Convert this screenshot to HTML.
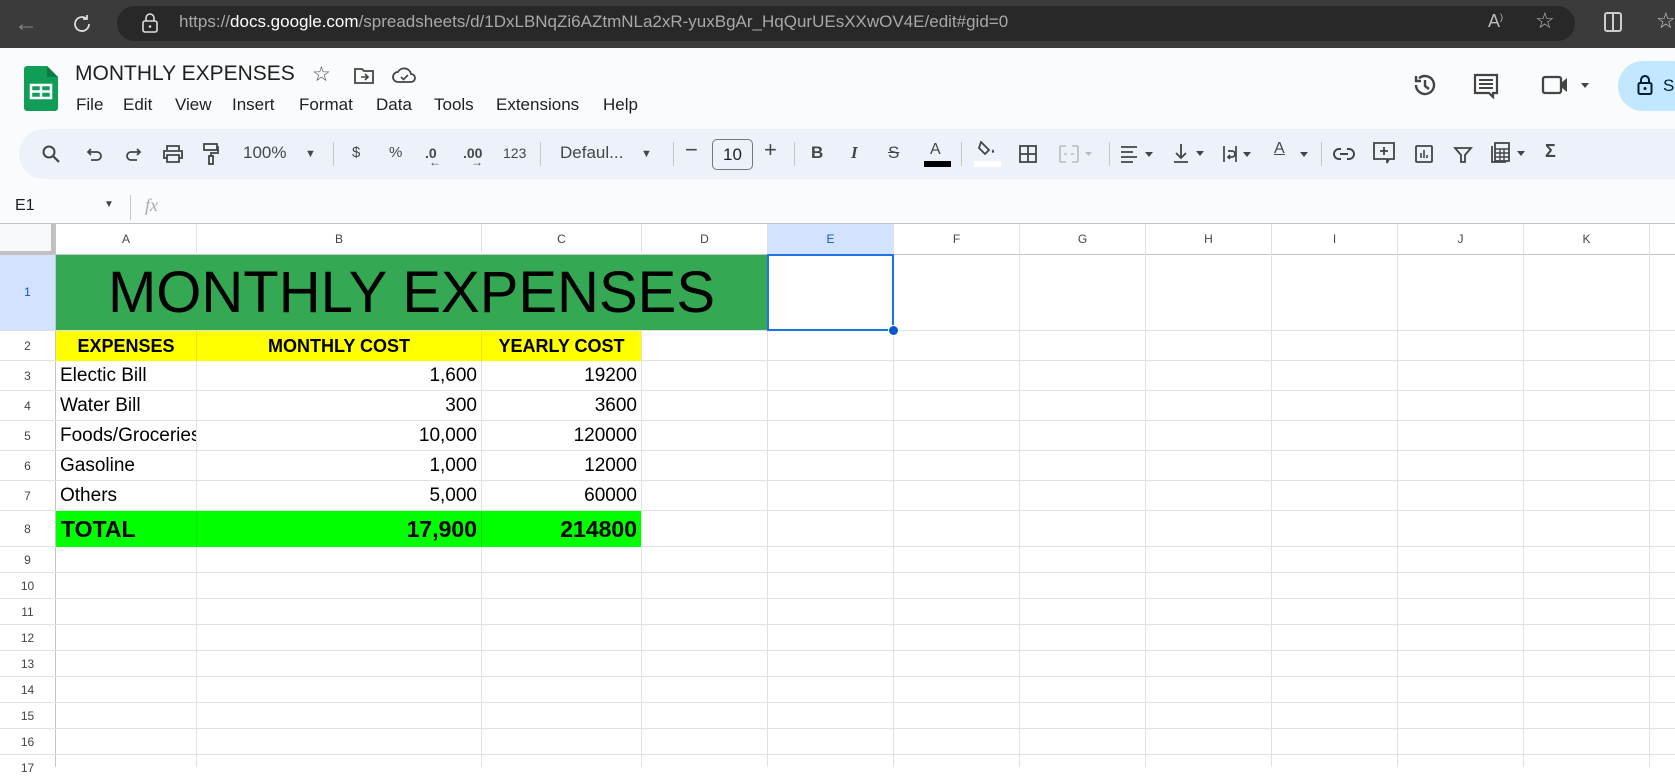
<!DOCTYPE html>
<html><head><meta charset="utf-8"><style>
*{margin:0;padding:0;box-sizing:border-box}
body{width:1675px;height:767px;overflow:hidden;background:#fff;font-family:"Liberation Sans",Arial,sans-serif;position:relative;color:#1f1f1f}
.a{position:absolute}
.tb{position:absolute;top:143px;font-size:15px;color:#444746;line-height:20px}
.sep{position:absolute;top:142px;width:1px;height:24px;background:#c7c7c7}
.vl{position:absolute;top:224px;width:1px;height:543px;background:#e1e1e1}
.hl{position:absolute;left:0;width:1675px;height:1px;background:#e1e1e1}
.rh{position:absolute;left:0;width:55px;text-align:center;font-size:12px;color:#444}
.ch{position:absolute;top:224px;height:30px;line-height:30px;text-align:center;font-size:12px;color:#444}
.c{position:absolute;font-size:19px;color:#000;white-space:nowrap;overflow:hidden}
svg{position:absolute}
</style></head><body>
<!-- browser bar -->
<div class="a" style="left:0;top:0;width:1675px;height:48px;background:#3b3b3b"></div>
<div class="a" style="left:117px;top:6px;width:1458px;height:35px;border-radius:18px;background:#282828"></div>
<div class="a" style="left:14px;top:10px;font-size:24px;color:#888">&#8592;</div>
<svg style="left:70px;top:12px" width="24" height="24" viewBox="0 0 24 24"><path d="M19 12a7 7 0 1 1-3-5.7M17 3v4h-4" fill="none" stroke="#ddd" stroke-width="1.8"/></svg>
<svg style="left:141px;top:12px" width="18" height="22" viewBox="0 0 18 22"><rect x="2" y="9" width="14" height="11" rx="2" fill="none" stroke="#ddd" stroke-width="1.6"/><path d="M5 9V6a4 4 0 0 1 8 0v3" fill="none" stroke="#ddd" stroke-width="1.6"/><circle cx="9" cy="14.5" r="1.3" fill="#ddd"/></svg>
<div class="a" style="left:179px;top:12px;font-size:17px;color:#a8a8a8;white-space:nowrap">https://<span style="color:#fff">docs.google.com</span>/spreadsheets/d/1DxLBNqZi6AZtmNLa2xR-yuxBgAr_HqQurUEsXXwOV4E/edit#gid=0</div>
<div class="a" style="left:1488px;top:11px;font-size:18px;color:#bbb">A<sup style="font-size:9px">)</sup></div>
<div class="a" style="left:1535px;top:8px;font-size:22px;color:#bbb">☆</div>
<div class="a" style="left:1604px;top:12px;width:18px;height:20px;border:2px solid #ccc;border-radius:3px"></div>
<div class="a" style="left:1612px;top:12px;width:2px;height:20px;background:#ccc"></div>
<div class="a" style="left:1656px;top:8px;font-size:22px;color:#ccc">☆</div>
<!-- sheets header -->
<div class="a" style="left:0;top:48px;width:1675px;height:176px;background:#f9fbfd"></div>
<svg style="left:24px;top:66px" width="34" height="45" viewBox="0 0 34 45"><path d="M3 0h20l11 11v31a3 3 0 0 1-3 3H3a3 3 0 0 1-3-3V3a3 3 0 0 1 3-3z" fill="#0f9d58"/><path d="M23 0v11h11z" fill="#0b7a43"/><rect x="7" y="19" width="20" height="13" fill="none" stroke="#fff" stroke-width="2.5"/><path d="M17 19v13M7 25.5h20" stroke="#fff" stroke-width="2.5"/></svg>
<div class="a" style="left:75px;top:62px;font-size:21px;color:#1f1f1f">MONTHLY EXPENSES</div>
<div class="a" style="left:312px;top:62px;font-size:21px;color:#444">☆</div>
<svg style="left:353px;top:67px" width="22" height="18" viewBox="0 0 22 18"><path d="M2 2h7l2 2h9v12H2z" fill="none" stroke="#444" stroke-width="1.8"/><path d="M8 10h7M12 7l3 3-3 3" fill="none" stroke="#444" stroke-width="1.6"/></svg>
<svg style="left:392px;top:66px" width="24" height="18" viewBox="0 0 24 18"><path d="M6 16a5 5 0 0 1 0-10 7 7 0 0 1 13 2 4 4 0 0 1 0 8z" fill="none" stroke="#444" stroke-width="1.8"/><path d="M9 11l2.5 2.5L16 9" fill="none" stroke="#444" stroke-width="1.6"/></svg>
<div class="a" style="left:76px;top:95px;font-size:17px;color:#1f1f1f;word-spacing:0">
<span style="position:absolute;left:0">File</span><span style="position:absolute;left:47px">Edit</span><span style="position:absolute;left:99px">View</span><span style="position:absolute;left:156px">Insert</span><span style="position:absolute;left:223px">Format</span><span style="position:absolute;left:300px">Data</span><span style="position:absolute;left:358px">Tools</span><span style="position:absolute;left:420px">Extensions</span><span style="position:absolute;left:527px">Help</span></div>
<svg style="left:1412px;top:72px" width="26" height="26" viewBox="0 0 26 26"><path d="M4 13a9 9 0 1 0 3-6.7M4 4v5h5" fill="none" stroke="#444" stroke-width="2.4"/><path d="M13 8v6l4 3" fill="none" stroke="#444" stroke-width="2.4"/></svg>
<svg style="left:1473px;top:73px" width="26" height="26" viewBox="0 0 26 26"><path d="M2 2h22v18h-4v4l-4-4H2z" fill="none" stroke="#444" stroke-width="2.2"/><path d="M6 7h14M6 11h14M6 15h14" stroke="#444" stroke-width="2"/></svg>
<svg style="left:1541px;top:74px" width="50" height="22" viewBox="0 0 50 22"><rect x="2" y="3" width="18" height="16" rx="2" fill="none" stroke="#444" stroke-width="2.3"/><path d="M20 9l6-5v14l-6-5z" fill="#444"/><path d="M40 9h8l-4 5z" fill="#444"/></svg>
<div class="a" style="left:1618px;top:61px;width:80px;height:50px;border-radius:25px;background:#c2e7ff"></div>
<svg style="left:1637px;top:74px" width="16" height="22" viewBox="0 0 16 22"><rect x="1.5" y="9" width="13" height="11" rx="1.5" fill="none" stroke="#001d35" stroke-width="2"/><path d="M4 9V6a4 4 0 0 1 8 0v3" fill="none" stroke="#001d35" stroke-width="2"/><circle cx="8" cy="14.5" r="1.5" fill="#001d35"/></svg>
<div class="a" style="left:1663px;top:76px;font-size:17px;color:#001d35">S</div>
<!-- toolbar -->
<div class="a" style="left:19px;top:129px;width:1700px;height:50px;border-radius:25px;background:#edf2fa"></div>
<svg style="left:41px;top:144px" width="20" height="20" viewBox="0 0 20 20"><circle cx="8" cy="8" r="5.5" fill="none" stroke="#444" stroke-width="2"/><path d="M12 12l6 6" stroke="#444" stroke-width="2.2"/></svg>
<svg style="left:86px;top:146px" width="18" height="18" viewBox="0 0 18 18"><path d="M5 3L2 6l3 3M2 6h9a4 4 0 0 1 0 8H5" fill="none" stroke="#444" stroke-width="1.8"/></svg>
<svg style="left:124px;top:146px" width="18" height="18" viewBox="0 0 18 18"><path d="M13 3l3 3-3 3M16 6H7a4 4 0 0 0 0 8h6" fill="none" stroke="#444" stroke-width="1.8"/></svg>
<svg style="left:162px;top:144px" width="22" height="20" viewBox="0 0 22 20"><path d="M5 6V2h12v4M5 14H2V7h18v7h-3M5 11h12v7H5z" fill="none" stroke="#444" stroke-width="1.8"/></svg>
<svg style="left:202px;top:142px" width="18" height="24" viewBox="0 0 18 24"><rect x="2" y="2" width="13" height="6" fill="none" stroke="#444" stroke-width="1.8"/><path d="M15 5h1v6H9v3" fill="none" stroke="#444" stroke-width="1.8"/><rect x="7" y="14" width="4" height="8" fill="none" stroke="#444" stroke-width="1.8"/></svg>
<div class="tb" style="left:243px;font-size:17px">100%</div>
<div class="tb" style="left:305px;font-size:11px;top:144px">▼</div>
<div class="sep" style="left:333px"></div>
<div class="tb" style="left:352px">$</div>
<div class="tb" style="left:389px">%</div>
<div class="tb" style="left:425px;font-size:14px;font-weight:bold">.0<span style="position:absolute;left:4px;top:9px;font-size:12px">←</span></div>
<div class="tb" style="left:463px;font-size:14px;font-weight:bold">.00<span style="position:absolute;left:8px;top:9px;font-size:12px">→</span></div>
<div class="tb" style="left:503px;font-size:14px">123</div>
<div class="sep" style="left:540px"></div>
<div class="tb" style="left:560px;font-size:17px">Defaul...</div>
<div class="tb" style="left:641px;font-size:11px;top:144px">▼</div>
<div class="sep" style="left:673px"></div>
<div class="tb" style="left:685px;font-size:22px;top:140px">−</div>
<div class="a" style="left:712px;top:139px;width:41px;height:31px;border:1px solid #747775;border-radius:5px;text-align:center;line-height:29px;font-size:17px;color:#1f1f1f">10</div>
<div class="tb" style="left:764px;font-size:22px;top:140px">+</div>
<div class="sep" style="left:794px"></div>
<div class="tb" style="left:811px;font-weight:bold;font-size:17px">B</div>
<div class="tb" style="left:851px;font-style:italic;font-size:17px;font-family:'Liberation Serif',serif;font-weight:bold">I</div>
<div class="tb" style="left:888px;font-size:17px;text-decoration:line-through">S</div>
<div class="tb" style="left:930px;font-size:16px;top:140px">A</div>
<div class="a" style="left:924px;top:161px;width:27px;height:6px;background:#000"></div>
<div class="sep" style="left:961px"></div>
<svg style="left:977px;top:140px" width="22" height="20" viewBox="0 0 22 20"><path d="M4 2l8 8-4 4-6-6z" fill="none" stroke="#444" stroke-width="1.8"/><path d="M16 9c-1 2-2 3 0 4 2-1 1-2 0-4z" fill="#444"/></svg>
<div class="a" style="left:974px;top:161px;width:27px;height:6px;background:#fff"></div>
<svg style="left:1018px;top:144px" width="20" height="20" viewBox="0 0 20 20"><rect x="2" y="2" width="16" height="16" fill="none" stroke="#444" stroke-width="1.8"/><path d="M10 2v16M2 10h16" stroke="#444" stroke-width="1.8"/></svg>
<svg style="left:1058px;top:144px" width="36" height="20" viewBox="0 0 36 20"><path d="M2 2h6M2 18h6M14 2h6M14 18h6M2 2v16M20 2v16M6 10h3M13 10h3" stroke="#bbb" stroke-width="1.6" fill="none"/><path d="M27 8h7l-3.5 4z" fill="#bbb"/></svg>
<div class="sep" style="left:1109px"></div>
<svg style="left:1119px;top:144px" width="40" height="20" viewBox="0 0 40 20"><path d="M2 3h16M2 8h12M2 13h16M2 18h12" stroke="#444" stroke-width="1.8"/><path d="M26 8h8l-4 5z" fill="#444"/></svg>
<svg style="left:1172px;top:142px" width="40" height="22" viewBox="0 0 40 22"><path d="M9 2v14M4 11l5 5 5-5M2 20h14" fill="none" stroke="#444" stroke-width="1.8"/><path d="M24 9h8l-4 5z" fill="#444"/></svg>
<svg style="left:1221px;top:143px" width="40" height="22" viewBox="0 0 40 22"><path d="M3 3v16M15 3v16M7 8h4a3 3 0 0 1 0 6H8M9 12l-2 2 2 2" fill="none" stroke="#444" stroke-width="1.7"/><path d="M22 9h8l-4 5z" fill="#444"/></svg>
<div class="tb" style="left:1274px;font-size:16px;top:139px;text-decoration:underline">A</div>
<svg style="left:1298px;top:150px" width="12" height="8" viewBox="0 0 12 8"><path d="M2 2h8l-4 5z" fill="#444"/></svg>
<div class="sep" style="left:1321px"></div>
<svg style="left:1333px;top:146px" width="22" height="16" viewBox="0 0 22 16"><path d="M8 3H6a5 5 0 0 0 0 10h2M14 3h2a5 5 0 0 1 0 10h-2M7 8h8" fill="none" stroke="#444" stroke-width="1.9"/></svg>
<svg style="left:1372px;top:141px" width="24" height="24" viewBox="0 0 24 24"><path d="M2 2h20v16h-5l-2 4v-4H2z" fill="none" stroke="#444" stroke-width="1.8"/><path d="M12 6v8M8 10h8" stroke="#444" stroke-width="1.8"/></svg>
<svg style="left:1414px;top:144px" width="20" height="20" viewBox="0 0 20 20"><rect x="2" y="2" width="16" height="16" rx="1" fill="none" stroke="#444" stroke-width="1.8"/><path d="M7 14V9M10 14V6M13 14v-3" stroke="#444" stroke-width="1.6"/></svg>
<svg style="left:1453px;top:145px" width="20" height="20" viewBox="0 0 20 20"><path d="M2 3h16l-6 7v7h-4v-7z" fill="none" stroke="#444" stroke-width="1.8"/></svg>
<svg style="left:1489px;top:141px" width="44" height="24" viewBox="0 0 44 24"><path d="M3 5v16h14" fill="none" stroke="#444" stroke-width="1.8"/><rect x="6" y="2" width="14" height="18" fill="none" stroke="#444" stroke-width="1.8"/><path d="M6 8h14M6 12h14M6 16h14M11 8v12M15 8v12" stroke="#444" stroke-width="1.4"/><path d="M28 10h8l-4 5z" fill="#444"/></svg>
<div class="tb" style="left:1545px;font-size:18px;top:141px;font-weight:bold">Σ</div>
<!-- formula bar -->
<div class="a" style="left:15px;top:197px;font-size:16px;color:#1f1f1f">E1</div>
<div class="a" style="left:104px;top:199px;font-size:10px;color:#444">▼</div>
<div class="a" style="left:130px;top:195px;width:1px;height:25px;background:#c7c7c7"></div>
<div class="a" style="left:145px;top:195px;font-size:18px;color:#aaa;font-style:italic;font-family:'Liberation Serif',serif">fx</div>
<!-- grid header -->
<div class="a" style="left:0;top:223px;width:1675px;height:1px;background:#c4c4c4"></div>
<div class="a" style="left:0;top:224px;width:55px;height:31px;background:#f8f9fa;border-right:4px solid #c0c0c0;border-bottom:4px solid #c0c0c0"></div>
<div class="a" style="left:767px;top:224px;width:126px;height:30px;background:#d3e3fd"></div>
<div class="a" style="left:0;top:255px;width:55px;height:75px;background:#d3e3fd"></div>
<div class="hl" style="top:254px;background:#c4c4c4"></div>
<div class="a" style="left:55px;top:224px;width:1px;height:543px;background:#c4c4c4"></div>
<div class="vl" style="left:196px"></div><div class="vl" style="left:481px"></div><div class="vl" style="left:641px"></div><div class="vl" style="left:767px"></div><div class="vl" style="left:893px"></div><div class="vl" style="left:1019px"></div><div class="vl" style="left:1145px"></div><div class="vl" style="left:1271px"></div><div class="vl" style="left:1397px"></div><div class="vl" style="left:1523px"></div><div class="vl" style="left:1649px"></div>
<div class="ch" style="left:56px;width:140px">A</div><div class="ch" style="left:197px;width:284px">B</div><div class="ch" style="left:482px;width:159px">C</div><div class="ch" style="left:642px;width:125px">D</div><div class="ch" style="left:768px;width:125px;color:#0b57d0">E</div><div class="ch" style="left:894px;width:125px">F</div><div class="ch" style="left:1020px;width:125px">G</div><div class="ch" style="left:1146px;width:125px">H</div><div class="ch" style="left:1272px;width:125px">I</div><div class="ch" style="left:1398px;width:125px">J</div><div class="ch" style="left:1524px;width:125px">K</div>
<!-- row lines -->
<div class="hl" style="top:330px"></div><div class="hl" style="top:360px"></div><div class="hl" style="top:390px"></div><div class="hl" style="top:420px"></div><div class="hl" style="top:450px"></div><div class="hl" style="top:480px"></div><div class="hl" style="top:510px"></div><div class="hl" style="top:546px"></div><div class="hl" style="top:572px"></div><div class="hl" style="top:598px"></div><div class="hl" style="top:624px"></div><div class="hl" style="top:650px"></div><div class="hl" style="top:676px"></div><div class="hl" style="top:702px"></div><div class="hl" style="top:728px"></div><div class="hl" style="top:754px"></div>
<!-- row headers -->
<div class="rh" style="top:255px;line-height:75px;color:#0b57d0">1</div>
<div class="rh" style="top:331px;line-height:30px">2</div><div class="rh" style="top:361px;line-height:30px">3</div><div class="rh" style="top:391px;line-height:30px">4</div><div class="rh" style="top:421px;line-height:30px">5</div><div class="rh" style="top:451px;line-height:30px">6</div><div class="rh" style="top:481px;line-height:30px">7</div><div class="rh" style="top:511px;line-height:36px">8</div>
<div class="rh" style="top:547px;line-height:26px">9</div><div class="rh" style="top:573px;line-height:26px">10</div><div class="rh" style="top:599px;line-height:26px">11</div><div class="rh" style="top:625px;line-height:26px">12</div><div class="rh" style="top:651px;line-height:26px">13</div><div class="rh" style="top:677px;line-height:26px">14</div><div class="rh" style="top:703px;line-height:26px">15</div><div class="rh" style="top:729px;line-height:26px">16</div><div class="rh" style="top:755px;line-height:26px">17</div>
<!-- title -->
<div class="a" style="left:56px;top:255px;width:711px;height:75px;background:#34a853"></div>
<div class="c" style="left:56px;top:255px;width:711px;height:75px;line-height:75px;text-align:center;font-size:58px">MONTHLY EXPENSES</div>
<!-- selection -->
<div class="a" style="left:767px;top:254px;width:127px;height:77px;border:2px solid #1a73e8"></div>
<div class="a" style="left:888px;top:325px;width:11px;height:11px;border-radius:50%;background:#0b57d0;border:1px solid #fff"></div>
<!-- header row -->
<div class="a" style="left:56px;top:331px;width:585px;height:30px;background:#ffff00"></div>
<div class="a" style="left:196px;top:331px;width:1px;height:30px;background:#e8e800"></div>
<div class="a" style="left:481px;top:331px;width:1px;height:30px;background:#e8e800"></div>
<div class="c" style="left:56px;top:331px;width:140px;line-height:30px;text-align:center;font-weight:bold;font-size:18px">EXPENSES</div>
<div class="c" style="left:197px;top:331px;width:284px;line-height:30px;text-align:center;font-weight:bold;font-size:18px">MONTHLY COST</div>
<div class="c" style="left:482px;top:331px;width:159px;line-height:30px;text-align:center;font-weight:bold;font-size:18px">YEARLY COST</div>
<!-- data -->
<div class="c" style="left:60px;top:361px;width:136px;line-height:30px">Electic Bill</div>
<div class="c" style="left:197px;top:361px;width:280px;line-height:30px;text-align:right">1,600</div>
<div class="c" style="left:482px;top:361px;width:155px;line-height:30px;text-align:right">19200</div>
<div class="c" style="left:60px;top:391px;width:136px;line-height:30px">Water Bill</div>
<div class="c" style="left:197px;top:391px;width:280px;line-height:30px;text-align:right">300</div>
<div class="c" style="left:482px;top:391px;width:155px;line-height:30px;text-align:right">3600</div>
<div class="c" style="left:60px;top:421px;width:136px;line-height:30px">Foods/Groceries</div>
<div class="c" style="left:197px;top:421px;width:280px;line-height:30px;text-align:right">10,000</div>
<div class="c" style="left:482px;top:421px;width:155px;line-height:30px;text-align:right">120000</div>
<div class="c" style="left:60px;top:451px;width:136px;line-height:30px">Gasoline</div>
<div class="c" style="left:197px;top:451px;width:280px;line-height:30px;text-align:right">1,000</div>
<div class="c" style="left:482px;top:451px;width:155px;line-height:30px;text-align:right">12000</div>
<div class="c" style="left:60px;top:481px;width:136px;line-height:30px">Others</div>
<div class="c" style="left:197px;top:481px;width:280px;line-height:30px;text-align:right">5,000</div>
<div class="c" style="left:482px;top:481px;width:155px;line-height:30px;text-align:right">60000</div>
<!-- total -->
<div class="a" style="left:56px;top:511px;width:585px;height:36px;background:#00ff00"></div>
<div class="a" style="left:196px;top:511px;width:1px;height:36px;background:#00e000"></div>
<div class="a" style="left:481px;top:511px;width:1px;height:36px;background:#00e000"></div>
<div class="c" style="left:61px;top:511px;width:136px;line-height:36px;font-weight:bold;font-size:23px">TOTAL</div>
<div class="c" style="left:197px;top:511px;width:280px;line-height:36px;text-align:right;font-weight:bold;font-size:23px">17,900</div>
<div class="c" style="left:482px;top:511px;width:155px;line-height:36px;text-align:right;font-weight:bold;font-size:23px">214800</div>
</body></html>
